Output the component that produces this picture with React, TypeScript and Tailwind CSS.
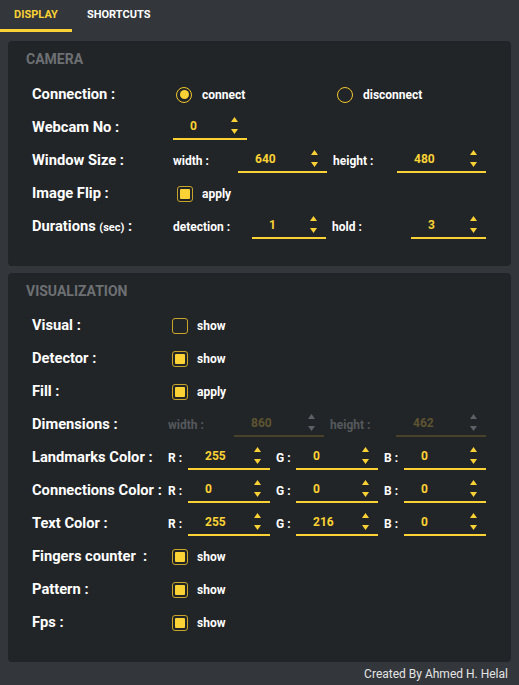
import React from 'react';

const font = { fontFamily: 'Roboto, "Liberation Sans", sans-serif' };

function Spinner({ disabled }: { disabled?: boolean }) {
  const c = disabled ? 'fill-[#5d6166]' : 'fill-[#fbd235]';
  return (
    <div className="absolute right-[9px] top-0 bottom-[3px] flex flex-col justify-between py-[1px]">
      <svg width="7" height="5" viewBox="0 0 7 5" className={c}>
        <path d="M3.5 0 L7 5 L0 5 Z" />
      </svg>
      <svg width="7" height="5" viewBox="0 0 7 5" className={c}>
        <path d="M0 0 L7 0 L3.5 5 Z" />
      </svg>
    </div>
  );
}

function NumberInput({ value, width, disabled }: { value: string; width: string; disabled?: boolean }) {
  return (
    <div
      className={`relative h-[24px] ${width} border-b-2 ${
        disabled ? 'border-[#4a4228]' : 'border-[#fbd235]'
      } flex items-center pl-[17px] pb-[2px]`}
    >
      <span className={`text-[12px] font-bold ${disabled ? 'text-[#5e5430]' : 'text-[#fbd235]'}`}>{value}</span>
      <Spinner disabled={disabled} />
    </div>
  );
}

function Checkbox({ checked, label }: { checked: boolean; label: string }) {
  return (
    <div className="flex items-center ml-[4px]">
      <div className="w-[16px] h-[16px] rounded-[3px] border-[1.5px] border-[#c9a42b] flex items-center justify-center">
        {checked && <div className="w-[10px] h-[10px] rounded-[1px] bg-[#fbd235]" />}
      </div>
      <span className="ml-[9px] text-[12px] font-bold text-white">{label}</span>
    </div>
  );
}

function Radio({ checked, label, width }: { checked: boolean; label: string; width: string }) {
  return (
    <div className={`flex items-center ${width}`}>
      <div className="w-[16px] h-[16px] rounded-full border-[1.5px] border-[#f2c62c] flex items-center justify-center">
        {checked && <div className="w-[9px] h-[9px] rounded-full bg-[#fbd235]" />}
      </div>
      <span className="ml-[10px] text-[12px] font-bold text-white">{label}</span>
    </div>
  );
}

function Row({ label, labelWidth, children }: { label: React.ReactNode; labelWidth: string; children: React.ReactNode }) {
  return (
    <div className="h-[33px] flex items-center pl-[6px]">
      <div className={`${labelWidth} shrink-0 text-[14.7px] font-bold text-white whitespace-pre`}>{label}</div>
      <div className="flex items-center">{children}</div>
    </div>
  );
}

function Small({ children, width, disabled }: { children: React.ReactNode; width: string; disabled?: boolean }) {
  return (
    <span className={`${width} shrink-0 text-[12px] font-bold ${disabled ? 'text-[#55595d]' : 'text-white'}`}>
      {children}
    </span>
  );
}

function ColorRow({ label, rgb }: { label: string; rgb: [string, string, string] }) {
  return (
    <Row label={label} labelWidth="w-[136px]">
      <Small width="w-[20px]">R :</Small>
      <NumberInput value={rgb[0]} width="w-[82px]" />
      <span className="w-[6px]" />
      <Small width="w-[20px]">G :</Small>
      <NumberInput value={rgb[1]} width="w-[82px]" />
      <span className="w-[6px]" />
      <Small width="w-[20px]">B :</Small>
      <NumberInput value={rgb[2]} width="w-[82px]" />
    </Row>
  );
}

export default function App() {
  return (
    <div className="w-full h-[685px] bg-[#33373b] flex flex-col" style={font}>
      {/* Tabs */}
      <div className="h-[32px] flex">
        <div className="w-[72px] flex items-center justify-center border-b-[3px] border-[#fbd235] text-[11px] font-bold text-[#fbd235] pt-[2px]">
          DISPLAY
        </div>
        <div className="px-[15px] flex items-center justify-center text-[11px] font-bold text-white pb-[1px]">
          SHORTCUTS
        </div>
      </div>

      <div className="flex flex-col gap-[7px] px-[8px] pt-[9px]">
        {/* Camera */}
        <div className="bg-[#222528] rounded-[4px] pt-[10px] pb-[23px] px-[18px]">
          <div className="h-[16px] leading-[16px] mb-[11px] text-[14px] font-bold text-[#6d7073]">CAMERA</div>
          <Row label="Connection :" labelWidth="w-[141px]">
            <div className="ml-[3px] flex">
              <Radio checked label="connect" width="w-[161px]" />
              <Radio checked={false} label="disconnect" width="w-[100px]" />
            </div>
          </Row>
          <Row label="Webcam No :" labelWidth="w-[141px]">
            <NumberInput value="0" width="w-[74px]" />
          </Row>
          <Row label="Window Size :" labelWidth="w-[141px]">
            <Small width="w-[65px]">width :</Small>
            <NumberInput value="640" width="w-[89px]" />
            <span className="w-[6px]" />
            <Small width="w-[64px]">height :</Small>
            <NumberInput value="480" width="w-[89px]" />
          </Row>
          <Row label="Image Flip :" labelWidth="w-[141px]">
            <Checkbox checked label="apply" />
          </Row>
          <Row
            label={
              <>
                Durations <span className="text-[11px]">(sec)</span> :
              </>
            }
            labelWidth="w-[141px]"
          >
            <Small width="w-[79px]">detection :</Small>
            <NumberInput value="1" width="w-[74px]" />
            <span className="w-[6px]" />
            <Small width="w-[79px]">hold :</Small>
            <NumberInput value="3" width="w-[75px]" />
          </Row>
        </div>

        {/* Visualization */}
        <div className="bg-[#222528] rounded-[4px] pt-[10px] pb-[23px] px-[18px]">
          <div className="h-[16px] leading-[16px] mb-[10px] text-[14px] font-bold text-[#6d7073]">VISUALIZATION</div>
          <Row label="Visual :" labelWidth="w-[136px]">
            <Checkbox checked={false} label="show" />
          </Row>
          <Row label="Detector :" labelWidth="w-[136px]">
            <Checkbox checked label="show" />
          </Row>
          <Row label="Fill :" labelWidth="w-[136px]">
            <Checkbox checked label="apply" />
          </Row>
          <Row label="Dimensions :" labelWidth="w-[136px]">
            <Small width="w-[66px]" disabled>width :</Small>
            <NumberInput value="860" width="w-[90px]" disabled />
            <span className="w-[6px]" />
            <Small width="w-[66px]" disabled>height :</Small>
            <NumberInput value="462" width="w-[90px]" disabled />
          </Row>
          <ColorRow label="Landmarks Color :" rgb={['255', '0', '0']} />
          <ColorRow label="Connections Color :" rgb={['0', '0', '0']} />
          <ColorRow label="Text Color :" rgb={['255', '216', '0']} />
          <Row label="Fingers counter  :" labelWidth="w-[136px]">
            <Checkbox checked label="show" />
          </Row>
          <Row label="Pattern :" labelWidth="w-[136px]">
            <Checkbox checked label="show" />
          </Row>
          <Row label="Fps :" labelWidth="w-[136px]">
            <Checkbox checked label="show" />
          </Row>
        </div>
      </div>

      {/* Footer */}
      <div className="flex-1 flex items-end justify-end pr-[11px] pb-[2px] text-[12px] text-[#e4e4e4]">
        Created By Ahmed H. Helal
      </div>
    </div>
  );
}
